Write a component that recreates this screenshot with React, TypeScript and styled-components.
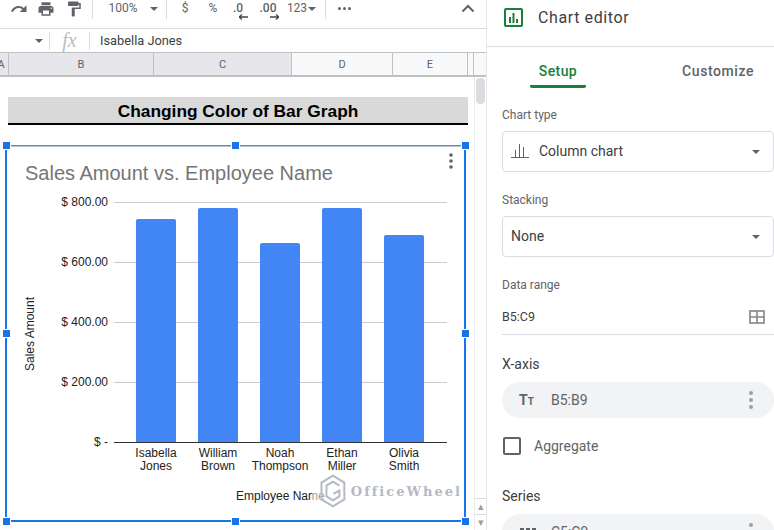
import React from "react";
import styled, { createGlobalStyle } from "styled-components";

const Global = createGlobalStyle`
  html, body { margin: 0; padding: 0; background: #fff; overflow: hidden; }
  body { font-family: Roboto, "Liberation Sans", Arial, sans-serif; }
`;

const bars = [
  { first: "Isabella", last: "Jones", x: 136, top: 219 },
  { first: "William", last: "Brown", x: 198, top: 208 },
  { first: "Noah", last: "Thompson", x: 260, top: 243 },
  { first: "Ethan", last: "Miller", x: 322, top: 208 },
  { first: "Olivia", last: "Smith", x: 384, top: 235 },
];
const ticks = [
  { label: "$ 800.00", y: 202 },
  { label: "$ 600.00", y: 262 },
  { label: "$ 400.00", y: 322 },
  { label: "$ 200.00", y: 382 },
];
const columns = [
  { name: "A", width: 15, selected: true },
  { name: "B", width: 145, selected: true },
  { name: "C", width: 138, selected: true },
  { name: "D", width: 101 },
  { name: "E", width: 75 },
  { name: "", width: 6 },
];
const handles = [
  { h: "left", v: "top" },
  { h: "center", v: "top" },
  { h: "right", v: "top" },
  { h: "left", v: "middle" },
  { h: "right", v: "middle" },
  { h: "left", v: "bottom" },
  { h: "center", v: "bottom" },
  { h: "right", v: "bottom" },
];

export default function App() {
  return (
    <Page>
      <Global />
      <Sheet>
        <Toolbar>
          <ToolIcon viewBox="0 0 24 24" $left={10}>
            <path d="M18.4 10.6C16.55 8.99 14.15 8 11.5 8c-4.65 0-8.58 3.03-9.96 7.22L3.9 16c1.05-3.19 4.05-5.5 7.6-5.5 1.95 0 3.73.72 5.12 1.88L13 16h9V7l-3.6 3.6z" />
          </ToolIcon>
          <ToolIcon viewBox="0 0 24 24" $left={9}>
            <path d="M19 8H5c-1.66 0-3 1.34-3 3v6h4v4h12v-4h4v-6c0-1.66-1.34-3-3-3zm-3 11H8v-5h8v5zm3-7c-.55 0-1-.45-1-1s.45-1 1-1 1 .45 1 1-.45 1-1 1zm-1-9H6v4h12V3z" />
          </ToolIcon>
          <ToolIcon viewBox="0 0 24 24" $left={10}>
            <path d="M18 4V3c0-.55-.45-1-1-1H5c-.55 0-1 .45-1 1v4c0 .55.45 1 1 1h12c.55 0 1-.45 1-1V6h1v4H9v11c0 .55.45 1 1 1h2c.55 0 1-.45 1-1v-9h8V4h-3z" />
          </ToolIcon>
          <ToolSep $left={9} />
          <ToolText $w={44} $left={8}>100%</ToolText>
          <Caret $left={5} $color="#5f6368" />
          <ToolSep $left={8} />
          <ToolText $w={14} $left={11}>$</ToolText>
          <ToolText $w={14} $left={14}>%</ToolText>
          <Decimal $w={22} $left={7} $shift={12}>
            .0
            <svg width="10" height="6" viewBox="0 0 10 6">
              <path d="M0 3h9M0 3l3-2.5M0 3l3 2.5" stroke="#444" strokeWidth="1.3" fill="none" />
            </svg>
          </Decimal>
          <Decimal $w={22} $left={8} $shift={11}>
            .00
            <svg width="10" height="6" viewBox="0 0 10 6">
              <path d="M1 3h9M10 3L7 .5M10 3L7 5.5" stroke="#444" strokeWidth="1.3" fill="none" />
            </svg>
          </Decimal>
          <ToolText $w={22} $left={7}>123</ToolText>
          <Caret $left={0} $color="#5f6368" />
          <ToolSep $left={9} />
          <MoreDots>
            <i />
            <i />
            <i />
          </MoreDots>
          <Chevron viewBox="0 0 14 9">
            <path d="M1.5 7.5L7 2l5.5 5.5" />
          </Chevron>
        </Toolbar>

        <FormulaBar>
          <Caret $left={35} $color="#5f6368" />
          <FormulaSep $left={6} />
          <Fx>fx</Fx>
          <FormulaSep $left={0} />
          <FormulaText>Isabella Jones</FormulaText>
        </FormulaBar>

        <HeaderRow>
          {columns.map((c, i) => (
            <ColHead key={i} $width={c.width} $selected={c.selected}>
              {c.name}
            </ColHead>
          ))}
          <HeaderFill />
        </HeaderRow>

        <SheetBody>
          <Grid>
            <TitleCell>Changing Color of Bar Graph</TitleCell>
            <ChartFrame>
              <svg width="459" height="376" viewBox="6 145 459 376">
                <rect x="6" y="145" width="459" height="1.5" fill="#6f87a3" />
                <text x="25" y="180" fontSize="20" fill="#757575" fontFamily="Liberation Sans">
                  Sales Amount vs. Employee Name
                </text>
                <circle cx="451" cy="155" r="1.8" fill="#5f6368" />
                <circle cx="451" cy="161" r="1.8" fill="#5f6368" />
                <circle cx="451" cy="167" r="1.8" fill="#5f6368" />
                {ticks.map((t) => (
                  <g key={t.y}>
                    <line x1="114" x2="447" y1={t.y + 0.5} y2={t.y + 0.5} stroke="#ccc" />
                    <text x="108" y={t.y + 4} textAnchor="end" fontSize="12" fill="#222" fontFamily="Liberation Sans">
                      {t.label}
                    </text>
                  </g>
                ))}
                <text x="108" y="446" textAnchor="end" fontSize="12" fill="#222" fontFamily="Liberation Sans">
                  $ -
                </text>
                {bars.map((b) => (
                  <g key={b.x}>
                    <path
                      d={`M${b.x} 442V${b.top + 2}q0-2 2-2h36q2 0 2 2V442z`}
                      fill="#4285f4"
                    />
                    <text x={b.x + 20} y="457" textAnchor="middle" fontSize="12" fill="#222" fontFamily="Liberation Sans">
                      {b.first}
                    </text>
                    <text x={b.x + 20} y="470" textAnchor="middle" fontSize="12" fill="#222" fontFamily="Liberation Sans">
                      {b.last}
                    </text>
                  </g>
                ))}
                <line x1="114" x2="447" y1="442.5" y2="442.5" stroke="#333" />
                <text
                  transform="translate(34 334) rotate(-90)"
                  textAnchor="middle"
                  fontSize="12"
                  fill="#222"
                  fontFamily="Liberation Sans"
                >
                  Sales Amount
                </text>
                <text x="236" y="500" fontSize="12" fill="#222" fontFamily="Liberation Sans">
                  Employee Name
                </text>
              </svg>
              {handles.map((p, i) => (
                <Handle key={i} $h={p.h} $v={p.v} />
              ))}
              <Watermark>
                <svg width="26" height="34" viewBox="0 0 26 34" fill="none" stroke="#b4b9c3" strokeWidth="2">
                  <path d="M13 1.5l11.5 7v17l-11.5 7-11.5-7v-17z" />
                  <path d="M19.5 11.5L13 7.5l-6.5 4v11l6.5 4 6.5-4v-6l-6 3.5" />
                </svg>
                <WatermarkText>OfficeWheel</WatermarkText>
              </Watermark>
            </ChartFrame>
          </Grid>
          <Scrollbar>
            <Thumb />
            <ScrollArrows>
              <ScrollArrow>▴</ScrollArrow>
              <ScrollArrow>▾</ScrollArrow>
            </ScrollArrows>
          </Scrollbar>
        </SheetBody>
      </Sheet>

      <Panel>
        <PanelHeader>
          <svg width="19" height="19" viewBox="0 0 19 19">
            <rect x="1" y="1" width="17" height="17" rx="1" fill="none" stroke="#188038" strokeWidth="2" />
            <path d="M5 9h2v6H5zM8.5 5h2v10h-2zM12 11h2v4h-2z" fill="#188038" />
          </svg>
          <PanelTitle>Chart editor</PanelTitle>
        </PanelHeader>

        <Tabs>
          <Tab $active>Setup</Tab>
          <Tab>Customize</Tab>
        </Tabs>

        <Section>
          <FieldLabel>Chart type</FieldLabel>
          <Select>
            <svg width="18" height="15" viewBox="0 0 18 15" fill="#5f6368">
              <path d="M0 14h18v1H0zM4 7h1v7H4zM8 1h1v13H8zM12 4h1v10h-1z" />
            </svg>
            <SelectText $withIcon>Column chart</SelectText>
            <Caret $left={0} $color="#5f6368" />
          </Select>

          <FieldLabel $top={20}>Stacking</FieldLabel>
          <Select>
            <SelectText>None</SelectText>
            <Caret $left={0} $color="#5f6368" />
          </Select>

          <FieldLabel $top={20}>Data range</FieldLabel>
          <RangeRow>
            <RangeText>B5:C9</RangeText>
            <svg width="16" height="14" viewBox="0 0 16 14" fill="none" stroke="#80868b" strokeWidth="1.6">
              <rect x="1" y="1" width="14" height="12" />
              <path d="M8 1v12M1 7h14" />
            </svg>
          </RangeRow>

          <GroupTitle $top={20}>X-axis</GroupTitle>
          <Chip>
            <ChipGlyph>
              T<small>T</small>
            </ChipGlyph>
            <ChipText>B5:B9</ChipText>
            <ChipDots>
              <i />
              <i />
              <i />
            </ChipDots>
          </Chip>

          <CheckRow>
            <CheckBox />
            <CheckLabel>Aggregate</CheckLabel>
          </CheckRow>

          <GroupTitle $top={32}>Series</GroupTitle>
          <Chip>
            <SeriesGlyph viewBox="0 0 18 8">
              <path d="M1 0h4v8H1zM7 0h4v8H7zM13 0h4v8h-4z" fill="#5f6368" />
            </SeriesGlyph>
            <ChipText>C5:C9</ChipText>
            <ChipDots>
              <i />
              <i />
              <i />
            </ChipDots>
          </Chip>
        </Section>
      </Panel>
    </Page>
  );
}

const Page = styled.div`
  display: flex;
  width: 774px;
  height: 530px;
  overflow: hidden;
  background: #fff;
`;

const Sheet = styled.div`
  width: 486px;
  flex: none;
  display: flex;
  flex-direction: column;
`;

const Toolbar = styled.div`
  height: 29px;
  flex: none;
  box-sizing: border-box;
  display: flex;
  align-items: flex-start;
  border-bottom: 1px solid #dadce0;
  position: relative;
`;

const ToolIcon = styled.svg<{ $left: number }>`
  width: 18px;
  height: 18px;
  flex: none;
  fill: #5f6368;
  margin-left: ${({ $left }) => $left}px;
`;

const ToolSep = styled.div<{ $left: number }>`
  width: 1px;
  height: 19px;
  flex: none;
  background: #dadce0;
  margin-left: ${({ $left }) => $left}px;
`;

const ToolText = styled.div<{ $w: number; $left: number }>`
  width: ${({ $w }) => $w}px;
  margin-left: ${({ $left }) => $left}px;
  flex: none;
  text-align: center;
  font-size: 12px;
  line-height: 17px;
  color: #5f6368;
  white-space: nowrap;
`;

const Decimal = styled(ToolText)<{ $shift: number }>`
  display: flex;
  flex-direction: column;
  align-items: center;
  line-height: 17px;
  height: 24px;
  font-weight: 500;

  svg {
    margin-top: -3px;
    margin-left: ${({ $shift }) => $shift}px;
  }
`;

const Caret = styled.div<{ $left: number; $color: string }>`
  width: 0;
  height: 0;
  flex: none;
  margin-left: ${({ $left }) => $left}px;
  margin-top: 7px;
  border-left: 4px solid transparent;
  border-right: 4px solid transparent;
  border-top: 4px solid ${({ $color }) => $color};
`;

const MoreDots = styled.div`
  display: flex;
  gap: 2px;
  margin-left: 12px;
  margin-top: 7px;

  i {
    width: 3px;
    height: 3px;
    border-radius: 50%;
    background: #5f6368;
  }
`;

const Chevron = styled.svg`
  position: absolute;
  left: 461px;
  top: 4px;
  width: 14px;
  height: 9px;

  path {
    fill: none;
    stroke: #5f6368;
    stroke-width: 2;
  }
`;

const FormulaBar = styled.div`
  height: 24px;
  flex: none;
  box-sizing: border-box;
  display: flex;
  align-items: center;
  border-bottom: 1px solid #c0c0c0;

  ${Caret} {
    margin-top: 0;
  }
`;

const FormulaSep = styled.div<{ $left: number }>`
  width: 1px;
  height: 18px;
  flex: none;
  background: #dadce0;
  margin-left: ${({ $left }) => $left}px;
`;

const Fx = styled.div`
  width: 39px;
  text-align: center;
  font-family: "Liberation Serif", serif;
  font-style: italic;
  font-size: 20px;
  color: #bdbdbd;
`;

const FormulaText = styled.div`
  margin-left: 10px;
  font-size: 12.8px;
  color: #3c4043;
`;

const HeaderRow = styled.div`
  height: 24px;
  flex: none;
  box-sizing: border-box;
  display: flex;
  border-bottom: 2px solid #c0c0c0;
`;

const ColHead = styled.div<{ $width: number; $selected?: boolean }>`
  width: ${({ $width }) => $width}px;
  flex: none;
  box-sizing: border-box;
  overflow: hidden;
  display: flex;
  align-items: center;
  justify-content: center;
  font-size: 11px;
  color: #5f6368;
  background: ${({ $selected }) => ($selected ? "#e5e7ea" : "#f8f9fa")};
  border-right: 1px solid #c0c0c0;

  &:first-child {
    margin-left: -6px;
  }
`;

const HeaderFill = styled.div`
  flex: 1;
  background: #f8f9fa;
`;

const SheetBody = styled.div`
  flex: 1;
  display: flex;
  min-height: 0;
`;

const Grid = styled.div`
  width: 474px;
  flex: none;
  box-sizing: border-box;
  padding: 20px 0 0 5px;
`;

const TitleCell = styled.div`
  margin-left: 3px;
  width: 460px;
  height: 28px;
  box-sizing: border-box;
  background: #d9d9d9;
  border-bottom: 2px solid #000;
  text-align: center;
  font-family: "Liberation Sans", Arial, sans-serif;
  font-weight: 700;
  font-size: 17.33px;
  line-height: 28px;
  color: #000;
`;

const ChartFrame = styled.div`
  position: relative;
  width: 461px;
  height: 377px;
  margin-top: 20px;
  box-sizing: border-box;
  border-left: 2px solid #1a73e8;
  border-right: 2px solid #1a73e8;
  border-bottom: 2px solid #1a73e8;

  > svg:first-child {
    display: block;
    margin-left: -1px;
  }
`;

const Handle = styled.div<{ $h: string; $v: string }>`
  position: absolute;
  width: 7px;
  height: 7px;
  background: #1a73e8;
  box-shadow: 0 0 0 1px #fff;
  left: ${({ $h }) =>
    $h === "left" ? "-4px" : $h === "center" ? "225px" : "auto"};
  right: ${({ $h }) => ($h === "right" ? "-5px" : "auto")};
  top: ${({ $v }) =>
    $v === "top" ? "-3px" : $v === "middle" ? "185px" : "auto"};
  bottom: ${({ $v }) => ($v === "bottom" ? "-5px" : "auto")};
`;

const Watermark = styled.div`
  position: absolute;
  left: 305px;
  top: 327px;
  width: 150px;
  height: 38px;
  box-sizing: border-box;
  display: flex;
  align-items: center;
  gap: 5px;
  padding-left: 8px;
  background: rgba(255, 255, 255, 0.55);
`;

const WatermarkText = styled.span`
  font-family: "DejaVu Serif", serif;
  font-weight: 700;
  font-size: 13px;
  letter-spacing: 2px;
  color: #b4b9c3;
`;

const Scrollbar = styled.div`
  flex: 1;
  box-sizing: border-box;
  border-left: 1px solid #e8eaed;
  padding: 1px 0 0 1px;
  display: flex;
  flex-direction: column;
`;

const Thumb = styled.div`
  width: 9px;
  height: 26px;
  border-radius: 4px;
  background: #dadce0;
`;

const ScrollArrows = styled.div`
  margin: auto 0 0 -1px;
  display: flex;
  flex-direction: column;
`;

const ScrollArrow = styled.div`
  height: 16px;
  box-sizing: border-box;
  border-top: 1px solid #dadce0;
  text-align: center;
  font-size: 11px;
  line-height: 15px;
  color: #9aa0a6;
`;

const Panel = styled.div`
  flex: 1;
  min-width: 0;
  box-sizing: border-box;
  border-left: 1px solid #e4e6e8;
  display: flex;
  flex-direction: column;
`;

const PanelHeader = styled.div`
  height: 47px;
  flex: none;
  box-sizing: border-box;
  display: flex;
  align-items: center;
  padding: 0 0 11px 17px;
  border-bottom: 1px solid #dadce0;
`;

const PanelTitle = styled.div`
  margin-left: 15px;
  font-size: 16px;
  color: #3c4043;
  letter-spacing: 0.6px;
`;

const Tabs = styled.div`
  height: 41px;
  flex: none;
  display: flex;
  padding-left: 43px;
`;

const Tab = styled.div<{ $active?: boolean }>`
  box-sizing: border-box;
  height: 41px;
  width: ${({ $active }) => ($active ? "56px" : "auto")};
  margin-left: ${({ $active }) => ($active ? "0" : "96px")};
  padding-top: 16px;
  text-align: center;
  font-size: 14px;
  font-weight: 500;
  letter-spacing: ${({ $active }) => ($active ? "0.4px" : "0.6px")};
  color: ${({ $active }) => ($active ? "#188038" : "#5f6368")};
  border-bottom: ${({ $active }) =>
    $active ? "3px solid #188038" : "3px solid transparent"};
  border-radius: 0 0 2px 2px;
`;

const Section = styled.div`
  padding: 19px 0 0 15px;
  display: flex;
  flex-direction: column;
`;

const FieldLabel = styled.div<{ $top?: number }>`
  font-size: 12px;
  line-height: 16px;
  color: #5f6368;
  margin-top: ${({ $top }) => $top ?? 0}px;
  margin-bottom: 8px;
`;

const Select = styled.div`
  height: 41px;
  box-sizing: border-box;
  border: 1px solid #dadce0;
  border-radius: 4px;
  display: flex;
  align-items: center;
  padding: 0 13px 2px 8px;

  ${Caret} {
    margin-top: 2px;
    flex: none;
  }
`;

const SelectText = styled.div<{ $withIcon?: boolean }>`
  flex: 1;
  margin-left: ${({ $withIcon }) => ($withIcon ? "10px" : "0")};
  font-size: 14px;
  color: #3c4043;
`;

const RangeRow = styled.div`
  height: 34px;
  box-sizing: border-box;
  display: flex;
  align-items: center;
  justify-content: space-between;
  padding: 0 9px 2px 0;
  border-bottom: 1px solid #dadce0;
`;

const RangeText = styled.div`
  font-size: 12.5px;
  color: #3c4043;
`;

const GroupTitle = styled.div<{ $top: number }>`
  margin-top: ${({ $top }) => $top}px;
  margin-bottom: 9px;
  font-size: 14px;
  line-height: 18px;
  color: #3c4043;
`;

const Chip = styled.div`
  height: 36px;
  flex: none;
  box-sizing: border-box;
  background: #f1f3f4;
  border-radius: 18px;
  display: flex;
  align-items: center;
  padding: 0 21px 0 17px;
`;

const ChipGlyph = styled.div`
  width: 32px;
  font-size: 14px;
  font-weight: 700;
  color: #5f6368;

  small {
    font-size: 10px;
  }
`;

const SeriesGlyph = styled.svg`
  width: 18px;
  height: 8px;
  margin-right: 14px;
`;

const ChipText = styled.div`
  flex: 1;
  font-size: 14px;
  color: #5f6368;
`;

const ChipDots = styled.div`
  display: flex;
  flex-direction: column;
  gap: 3px;

  i {
    width: 4px;
    height: 4px;
    border-radius: 50%;
    background: #9aa0a6;
  }
`;

const CheckRow = styled.div`
  display: flex;
  align-items: center;
  margin-top: 19px;
  padding-left: 1px;
`;

const CheckBox = styled.div`
  width: 18px;
  height: 18px;
  box-sizing: border-box;
  border: 2px solid #5f6368;
  border-radius: 2px;
`;

const CheckLabel = styled.div`
  margin-left: 13px;
  font-size: 14px;
  color: #5f6368;
`;
